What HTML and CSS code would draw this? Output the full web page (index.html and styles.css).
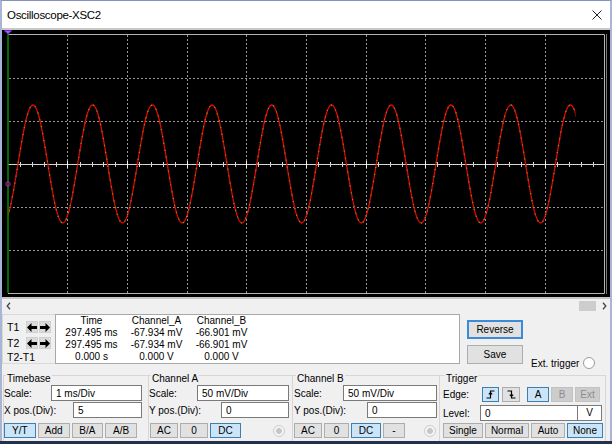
FILE: index.html
```html
<!DOCTYPE html>
<html>
<head>
  <title>Oscilloscope-XSC2</title>
  <link rel="stylesheet" href="styles.css">
</head>
<body>
  <div class="window">
    <div class="titlebar">
      <span class="title">Oscilloscope-XSC2</span>
      <svg class="close" width="10" height="10" viewBox="0 0 10 10"><path d="M0.5 0.5L9.5 9.5M9.5 0.5L0.5 9.5"/></svg>
    </div>

    <div class="screen">
      <svg class="scope" width="608" height="267" viewBox="2 30 608 267">
        <defs>
          <clipPath id="plot"><rect x="8" y="34" width="567.5" height="259"/></clipPath>
          <path id="wave" d="M3.05 223c5.17 0 9.49-25.25 14.93-59
            s9.76-59 14.93-59s9.49 25.25 14.93 59s9.76 59 14.93 59s9.49-25.25 14.93-59
            s9.76-59 14.93-59s9.49 25.25 14.93 59s9.76 59 14.93 59s9.49-25.25 14.93-59
            s9.76-59 14.93-59s9.49 25.25 14.93 59s9.76 59 14.93 59s9.49-25.25 14.93-59
            s9.76-59 14.93-59s9.49 25.25 14.93 59s9.76 59 14.93 59s9.49-25.25 14.93-59
            s9.76-59 14.93-59s9.49 25.25 14.93 59s9.76 59 14.93 59s9.49-25.25 14.93-59
            s9.76-59 14.93-59s9.49 25.25 14.93 59s9.76 59 14.93 59s9.49-25.25 14.93-59
            s9.76-59 14.93-59s9.49 25.25 14.93 59s9.76 59 14.93 59s9.49-25.25 14.93-59
            s9.76-59 14.93-59s9.49 25.25 14.93 59s9.76 59 14.93 59s9.49-25.25 14.93-59
            s9.76-59 14.93-59s9.49 25.25 14.93 59s9.76 59 14.93 59s9.49-25.25 14.93-59
            s9.76-59 14.93-59s9.49 25.25 14.93 59s9.76 59 14.93 59s9.49-25.25 14.93-59"/>
        </defs>
        <rect x="2" y="30" width="608" height="267" fill="#000"/>
        <!-- grid -->
        <g stroke="#969696" stroke-dasharray="2 2" fill="none">
          <path d="M67.5 35V293M127.5 35V293M187.5 35V293M246.5 35V293M306.5 35V293M366.5 35V293M425.5 35V293M485.5 35V293M545.5 35V293"/>
          <path d="M9 78.5H604M9 121.5H604M9 207.5H604M9 250.5H604"/>
        </g>
        <!-- time axis -->
        <g stroke="#d6d6d6" fill="none">
          <path d="M8 164.5H605"/>
          <path d="M20.5 162v5M32.5 162v5M44.5 162v5M56.5 162v5M80.5 162v5M92.5 162v5M103.5 162v5M115.5 162v5M139.5 162v5M151.5 162v5M163.5 162v5M175.5 162v5M199.5 162v5M211.5 162v5M223.5 162v5M235.5 162v5M258.5 162v5M270.5 162v5M282.5 162v5M294.5 162v5M318.5 162v5M330.5 162v5M342.5 162v5M354.5 162v5M378.5 162v5M390.5 162v5M402.5 162v5M414.5 162v5M437.5 162v5M449.5 162v5M461.5 162v5M473.5 162v5M497.5 162v5M509.5 162v5M521.5 162v5M533.5 162v5M557.5 162v5M569.5 162v5M581.5 162v5M593.5 162v5"/>
          <path stroke="#f2f2f2" d="M67.5 161v7M127.5 161v7M187.5 161v7M246.5 161v7M306.5 161v7M366.5 161v7M425.5 161v7M485.5 161v7M545.5 161v7"/>
        </g>
        <path d="M8 34.5H604.5V293.5H8" stroke="#b4b4b4" fill="none"/>
        <path d="M606.5 34V294" stroke="#7a7a7a"/>
        <!-- traces -->
        <g clip-path="url(#plot)" fill="none">
          <use href="#wave" stroke="#ee0000" stroke-width="1.3"/>
          <use href="#wave" stroke="#2cc22c" stroke-width="1.3" stroke-dasharray="1 6"/>
        </g>
        <!-- cursor -->
        <path d="M8 34V293" stroke="#008f00" stroke-width="1.5"/>
        <circle cx="8" cy="184" r="2.2" stroke="#e000e0" fill="none"/>
        <path d="M4 30.5H12L8 34Z" fill="#e040e0" stroke="#3a3aff" stroke-width="0.6"/>
      </svg>
    </div>

    <div class="hscroll">
      <span class="sarrow"><svg width="5" height="8" viewBox="0 0 5 8"><path d="M4 0.8L1.2 4L4 7.2"/></svg></span>
      <div class="track"><div class="thumb"></div></div>
      <span class="sarrow"><svg width="5" height="8" viewBox="0 0 5 8"><path d="M1 0.8L3.8 4L1 7.2"/></svg></span>
    </div>

    <div class="readout">
      <div class="cursors">
        <div class="crow">
          <span class="clabel">T1</span>
          <button class="arrow"><svg width="10" height="9" viewBox="0 0 10 9"><path d="M0 4.5L4.5 0V3H10V6H4.5V9Z"/></svg></button>
          <button class="arrow"><svg width="10" height="9" viewBox="0 0 10 9"><path d="M10 4.5L5.5 0V3H0V6H5.5V9Z"/></svg></button>
        </div>
        <div class="crow">
          <span class="clabel">T2</span>
          <button class="arrow"><svg width="10" height="9" viewBox="0 0 10 9"><path d="M0 4.5L4.5 0V3H10V6H4.5V9Z"/></svg></button>
          <button class="arrow"><svg width="10" height="9" viewBox="0 0 10 9"><path d="M10 4.5L5.5 0V3H0V6H5.5V9Z"/></svg></button>
        </div>
        <div class="crow diff">T2-T1</div>
      </div>
      <div class="values">
        <span>Time</span><span>Channel_A</span><span>Channel_B</span>
        <span>297.495 ms</span><span>-67.934 mV</span><span>-66.901 mV</span>
        <span>297.495 ms</span><span>-67.934 mV</span><span>-66.901 mV</span>
        <span>0.000 s</span><span>0.000 V</span><span>0.000 V</span>
      </div>
      <div class="actions">
        <button class="focused">Reverse</button>
        <button>Save</button>
      </div>
      <div class="ext">Ext. trigger <span class="radio"></span></div>
    </div>

    <div class="controls">
      <div class="group timebase">
        <div class="legend">Timebase</div>
        <div class="row"><span>Scale:</span><input class="field scale" value="1 ms/Div"></div>
        <div class="row gap1"><span>X pos.(Div):</span><input class="field pos" value="5"></div>
        <div class="btnrow">
          <button class="on">Y/T</button><button>Add</button><button>B/A</button><button>A/B</button>
        </div>
      </div>

      <div class="group chan-a">
        <div class="legend">Channel A</div>
        <div class="row"><span>Scale:</span><input class="field scale" value="50 mV/Div"></div>
        <div class="row gap1"><span>Y pos.(Div):</span><input class="field pos" value="0"></div>
        <div class="btnrow">
          <button class="w28">AC</button><button class="w28">0</button><button class="w31 on">DC</button>
          <span class="radio off"></span>
        </div>
      </div>

      <div class="group chan-b">
        <div class="legend">Channel B</div>
        <div class="row"><span>Scale:</span><input class="field scale" value="50 mV/Div"></div>
        <div class="row gap1"><span>Y pos.(Div):</span><input class="field pos" value="0"></div>
        <div class="btnrow">
          <button class="w28">AC</button><button class="w25">0</button><button class="w30 on">DC</button><button class="w22">-</button>
          <span class="radio off"></span>
        </div>
      </div>

      <div class="group trigger">
        <div class="legend">Trigger</div>
        <div class="trow edge">
          <span class="tlabel">Edge:</span>
          <button class="w17 on"><svg width="9" height="9" viewBox="0 0 9 9"><path d="M0.5 8H4.5V1H8.5M2.8 4.4L4.5 2.6L6.2 4.4"/></svg></button>
          <button class="w18 fall"><svg width="9" height="9" viewBox="0 0 9 9"><path d="M0.5 1H4.5V8H8.5M2.8 4.6L4.5 6.4L6.2 4.6"/></svg></button>
          <button class="w22 src on">A</button><button class="w22" disabled>B</button><button class="w25" disabled>Ext</button>
        </div>
        <div class="trow level">
          <span class="tlabel">Level:</span>
          <input class="field lvl" value="0"><span class="unit">V</span>
        </div>
        <div class="btnrow">
          <button class="w40">Single</button><button class="w44">Normal</button><button class="w34">Auto</button><button class="w36 on">None</button>
        </div>
      </div>
    </div>
  </div>
</body>
</html>
```

FILE: styles.css
```css
* {
  box-sizing: border-box;
}

html {
  background: #23314f;
}

body {
  margin: 0;
  font-family: "Liberation Sans", Arial, sans-serif;
  font-size: 10px;
  color: #000;
}

.window {
  width: 612px;
  height: 441px;
  background: #f0f0f0;
  border-left: 2px solid #aab5d5;
  border-right: 2px solid #aab5d5;
  border-top: 1px solid #8492bd;
  display: flex;
  flex-direction: column;
  overflow: hidden;
}

/* title bar */
.titlebar {
  height: 29px;
  flex: none;
  background: #fff;
  border-bottom: 2px solid #c8c8c8;
  display: flex;
  align-items: center;
  justify-content: space-between;
  padding: 0 8px 0 5px;
}

.title {
  font-size: 11.5px;
  letter-spacing: -0.3px;
}

.close path {
  stroke: #222;
  stroke-width: 1;
  fill: none;
}

/* scope screen */
.screen {
  flex: none;
  height: 269px;
  border-bottom: 2px solid #c6c6c6;
}

.scope {
  display: block;
}

.hscroll {
  flex: none;
  height: 13px;
  display: flex;
  align-items: center;
}

.sarrow {
  width: 12px;
  display: flex;
  justify-content: center;
}

.sarrow path {
  stroke: #444;
  stroke-width: 1.3;
  fill: none;
}

.track {
  flex: 1;
  display: flex;
  justify-content: flex-end;
}

.thumb {
  width: 17px;
  height: 10px;
  margin-right: 2px;
  background: #cdcdcd;
}

/* readout */
.readout {
  flex: none;
  height: 60px;
  padding-top: 2px;
  display: flex;
  align-items: flex-start;
}

.cursors {
  width: 53px;
  height: 50px;
  border: 1px solid #d9d9d9;
  border-right: none;
  padding: 6px 0 0 4px;
}

.crow {
  display: flex;
  align-items: center;
  height: 12px;
  margin-bottom: 4px;
  font-size: 10.5px;
}

.crow.diff {
  margin-bottom: 0;
  margin-top: -2px;
}

.clabel {
  width: 19px;
}

.arrow {
  width: 12px;
  height: 12px;
  margin-right: 1px;
  padding: 0;
  background: #dadada;
  border: 1px solid #d0d0d0;
  display: flex;
  align-items: center;
  justify-content: center;
}

.arrow path {
  fill: #000;
}

.values {
  width: 405px;
  height: 50px;
  background: #fff;
  border: 1px solid #a8a8a8;
  padding-left: 3px;
  display: grid;
  grid-template-columns: 65px 65px 65px;
  align-content: start;
  line-height: 12px;
  text-align: center;
}

.actions {
  width: 56px;
  margin-left: 7px;
  padding-top: 6px;
  display: flex;
  flex-direction: column;
  gap: 6px;
}

.actions button {
  width: 56px;
  height: 19px;
}

.actions button.focused {
  border: 2px solid #3b8bd8;
}

.ext {
  margin: 43px 0 0 8px;
  display: flex;
  align-items: center;
  gap: 4px;
}

.radio {
  display: inline-block;
  width: 12px;
  height: 12px;
  border-radius: 50%;
  border: 1px solid #9a9a9a;
  background: #fff;
  flex: none;
}

.radio.off {
  border-color: #cdcdcd;
  background: radial-gradient(circle, #c6c6c6 0 2.6px, #f4f4f4 3.2px);
  margin-left: auto;
}

/* control groups */
.controls {
  flex: 1;
  display: flex;
  padding: 3px 4px 0 1px;
}

.group {
  border-top: 1px solid #d6d6d6;
  border-left: 1px solid #d6d6d6;
}

.legend {
  width: max-content;
  margin: -3px 0 0 2px;
  padding: 0 1px;
  line-height: 12px;
  background: #f0f0f0;
}

.timebase { width: 145px; padding-right: 6px; }
.chan-a { width: 144px; padding-right: 3px; }
.chan-b { width: 147px; padding: 0 2px 0 1px; }
.trigger { width: 167px; padding: 0 2px 0 3px; border-right: 1px solid #d6d6d6; }

.row {
  height: 16px;
  display: flex;
  align-items: center;
  justify-content: space-between;
}

.row.gap1 {
  margin-top: 1px;
}

.field {
  font: inherit;
  color: #000;
  height: 16px;
  border: 1px solid #7a7a7a;
  background: #fff;
  padding: 0 4px;
  outline: none;
}

.timebase .scale { width: 91px; }
.timebase .pos { width: 69px; }
.chan-a .scale { width: 92px; }
.chan-a .pos { width: 68px; }
.chan-b .scale { width: 94px; }
.chan-b .pos { width: 70px; }

button {
  font: inherit;
  color: #000;
  height: 15px;
  padding: 0;
  background: #e1e1e1;
  border: 1px solid #adadad;
  flex: none;
}

button.on {
  background: #cce4f7;
  border-color: #3c7fb1;
}

button:disabled {
  background: #cccccc;
  border-color: #c2c2c2;
  color: #8e8e8e;
}

.btnrow {
  margin-top: 5px;
  display: flex;
  align-items: center;
  gap: 2px;
}

.timebase .btnrow {
  width: 133px;
}

.timebase .btnrow button {
  flex: 1;
}

.chan-a .btnrow {
  padding-left: 1px;
}

.chan-a .radio.off {
  margin-right: 4px;
}

.chan-b .radio.off {
  margin-right: 1px;
}

.w17 { width: 17px; }
.w18 { width: 18px; }
.w22 { width: 22px; }
.w25 { width: 25px; }
.w28 { width: 28px; }
.w30 { width: 30px; }
.w31 { width: 31px; }
.w34 { width: 34px; }
.w36 { width: 36px; }
.w40 { width: 40px; }
.w44 { width: 44px; }

/* trigger */
.trow {
  display: flex;
  align-items: center;
}

.trow.edge {
  margin-top: 2px;
  height: 15px;
  gap: 2px;
}

.edge .tlabel {
  width: 37px;
}

.edge button {
  display: flex;
  align-items: center;
  justify-content: center;
}

.edge svg path {
  stroke: #000;
  stroke-width: 1.2;
  fill: none;
}

.edge .fall {
  margin-left: 1px;
}

.edge .src {
  margin-left: 5px;
}

.trow.level {
  margin-top: 3px;
  height: 16px;
}

.level .tlabel {
  width: 37px;
}

.lvl {
  width: 98px;
}

.unit {
  width: 25px;
  height: 16px;
  margin-left: -1px;
  border: 1px solid #7a7a7a;
  background: #fff;
  line-height: 14px;
  text-align: center;
}

.trigger .btnrow {
  margin-top: 2px;
}
```
